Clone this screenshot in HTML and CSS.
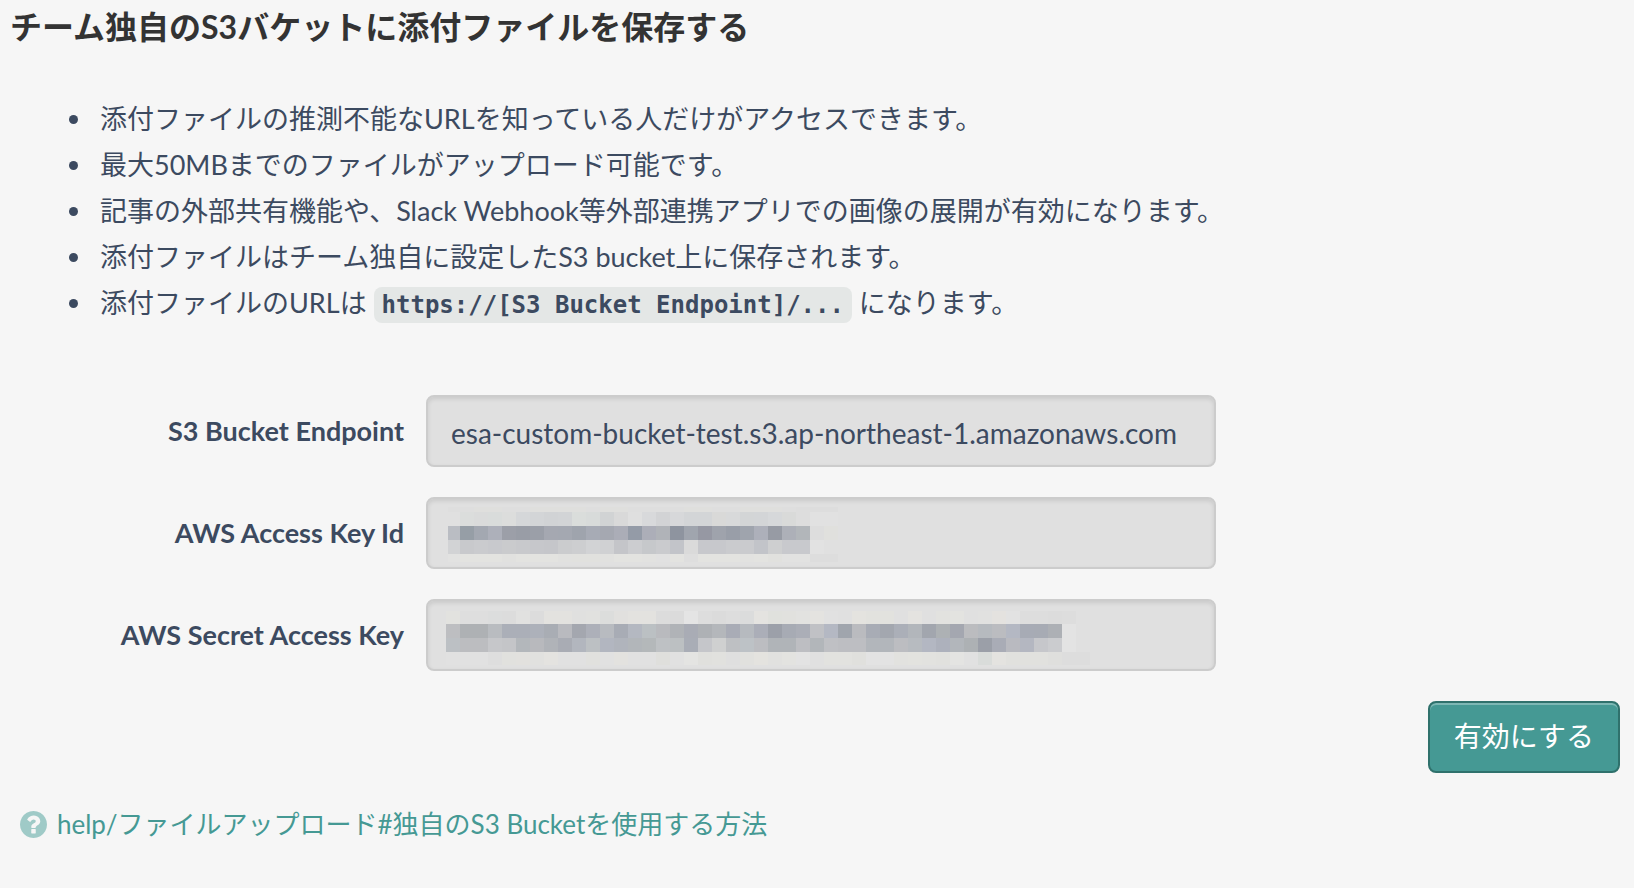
FILE: index.html
```html
<!DOCTYPE html>
<html lang="ja">
<head>
    <meta charset="UTF-8">
    <meta name="viewport" content="width=device-width, initial-scale=1.0">
    <title>チーム独自のS3バケットに添付ファイルを保存する</title>
    <link rel="stylesheet" href="styles.css">
</head>
<body>
    <main class="settings">
        <h1 class="settings-title">チーム独自のS3バケットに添付ファイルを保存する</h1>

        <ul class="notes">
            <li>添付ファイルの推測不能なURLを知っている人だけがアクセスできます。</li>
            <li>最大50MBまでのファイルがアップロード可能です。</li>
            <li>記事の外部共有機能や、Slack Webhook等外部連携アプリでの画像の展開が有効になります。</li>
            <li>添付ファイルはチーム独自に設定したS3 bucket上に保存されます。</li>
            <li>添付ファイルのURLは <code>https://[S3 Bucket Endpoint]/...</code> になります。</li>
        </ul>

        <form class="bucket-form">
            <div class="form-row">
                <label for="endpoint">S3 Bucket Endpoint</label>
                <div class="field">
                    <input type="text" id="endpoint" value="esa-custom-bucket-test.s3.ap-northeast-1.amazonaws.com" disabled>
                </div>
            </div>
            <div class="form-row">
                <label for="access-key">AWS Access Key Id</label>
                <div class="field">
                    <input type="text" id="access-key" disabled>
                    <svg class="mask mask-access" id="access-mask" width="400" height="55" aria-hidden="true"></svg>
                </div>
            </div>
            <div class="form-row">
                <label for="secret-key">AWS Secret Access Key</label>
                <div class="field">
                    <input type="text" id="secret-key" disabled>
                    <svg class="mask mask-secret" id="secret-mask" width="646" height="55" aria-hidden="true"></svg>
                </div>
            </div>
            <button type="submit" class="submit-btn">有効にする</button>
        </form>

        <p class="help">
            <svg class="help-icon" viewBox="128 128 1536 1536" aria-hidden="true">
                <path d="M1024 1376v-192q0-14-9-23t-23-9h-192q-14 0-23 9t-9 23v192q0 14 9 23t23 9h192q14 0 23-9t9-23zm256-672q0-88-55.5-163t-138.5-116-170-41q-243 0-371 213-15 24 8 42l132 100q7 6 19 6 16 0 25-12 53-68 86-92 34-24 86-24 48 0 85.5 26t37.5 59q0 38-20 61t-68 45q-63 28-115.5 86.5t-52.5 125.5v36q0 14 9 23t23 9h192q14 0 23-9t9-23q0-19 21.5-49.5t54.5-49.5q32-18 49-28.5t46-35 44.5-48 28-60.5 12.5-81zm384 192q0 209-103 385.5t-279.5 279.5-385.5 103-385.5-103-279.5-279.5-103-385.5 103-385.5 279.5-279.5 385.5-103 385.5 103 279.5 279.5 103 385.5z"/>
            </svg>
            <a href="#help">help/ファイルアップロード#独自のS3 Bucketを使用する方法</a>
        </p>
    </main>
    <script src="mask.js"></script>
</body>
</html>
```

FILE: styles.css
```css
* {
    box-sizing: border-box;
}
body {
    margin: 0;
    background-color: #f6f6f6;
    color: #3c4a60;
    font-family: Lato, "Noto Sans CJK JP", sans-serif;
    font-size: 27px;
    line-height: 46px;
}
.settings {
    padding: 3px 14px 32px 10px;
}
.settings-title {
    margin: 0 0 45px;
    color: #333;
    font-size: 32px;
    font-weight: bold;
    line-height: 48px;
}
.notes {
    margin: 0 0 67px;
    padding-left: 84px;
}
.notes li {
    padding-left: 6px;
}
.notes code {
    padding: 4px 8px;
    border-radius: 8px;
    background-color: #e4e7e6;
    font-family: "DejaVu Sans Mono", monospace;
    font-size: 24px;
    font-weight: bold;
}
.bucket-form {
    display: flex;
    flex-direction: column;
    gap: 30px;
    margin-bottom: 28px;
}
.form-row {
    display: grid;
    grid-template-columns: 197fr 395fr 191fr;
    column-gap: 22px;
    align-items: center;
}
.form-row label {
    font-weight: bold;
    text-align: right;
}
.field {
    position: relative;
}
.field input {
    display: block;
    width: 100%;
    height: 72px;
    padding: 4px 23px 0;
    border: 2px solid #ccc;
    border-radius: 8px;
    background-color: #e0e0e0;
    box-shadow: inset 0 2px 4px rgba(0,0,0,0.1);
    color: #3c4a60;
    font-family: inherit;
    font-size: 28px;
}
.mask {
    position: absolute;
    shape-rendering: crispEdges;
}
.mask-access { top: 10px; left: 22px; }
.mask-secret { top: 12px; left: 20px; }
.submit-btn {
    align-self: flex-end;
    height: 72px;
    padding: 0 24px 4px;
    border: 2px solid #2f716c;
    border-radius: 8px;
    background-color: #459994;
    box-shadow: inset 0 2px 0 rgba(255,255,255,0.3);
    color: #fff;
    font-family: inherit;
    font-size: 28px;
    cursor: pointer;
}
.help {
    display: flex;
    align-items: center;
    gap: 10px;
    margin: 0;
    padding-left: 10px;
    font-size: 26px;
}
.help-icon {
    width: 27px;
    height: 27px;
    fill: #9fcac7;
}
.help a {
    color: #459994;
    text-decoration: none;
}
```

FILE: mask.js
```js
// 伏せ字のモザイク。rows: [y, 高さ, 色の並び]
const CELL = 14;

function drawMask(id, firstWidth, rows) {
    const svg = document.getElementById(id);
    rows.forEach(([y, height, colors]) => {
        let x = 0;
        colors.split(' ').forEach((color, i) => {
            const width = i === 0 ? firstWidth : CELL;
            const rect = document.createElementNS('http://www.w3.org/2000/svg', 'rect');
            rect.setAttribute('x', x);
            rect.setAttribute('y', y);
            rect.setAttribute('width', width);
            rect.setAttribute('height', height);
            rect.setAttribute('fill', '#' + color);
            svg.appendChild(rect);
            x += width;
        });
    });
}

drawMask('access-mask', 12, [
    [0, 5, 'dedede dedede dfdfdd dfdfdd dedede dedede dfdfdd dfdfdd dfdfdd dfdfdd dedede dfdfdd dfdfdd dedede dedede dedede dedede dfdfdd dfdfdd dedede dedede dfdfdd dfdfdd dfdfdd dedede dddddd dddddd dddddd'],
    [5, 14, 'e0e0e0 dbdddc dadbdb d9dcdb dcdddc d5d7d9 d3d5d7 d1d3d5 d2d4d6 dadddb d8dbda d1d3d4 d9d9d9 dfdfdf d8d9db d2d3d5 d7d8da d3d5d7 d3d5d7 d9d9d8 d8d9da d3d5d6 d3d5d7 d6d8da d9dad9 dddddd e1e1e1 e1e1e1'],
    [19, 14, 'babdc3 969ea6 a3a8b1 adb0ba 9c9fa8 999da6 9b9fa8 a5a8b1 a4a8b1 9fa4ad a7abb5 a5a8b1 abadb7 949ba7 acaeb8 b0b3b8 8e949f a0a5ae 9698a3 9fa3ac 999ea8 9fa4ad adb0ba 979ba4 adb0b8 b2b6ba dddddd e0e0dd'],
    [33, 14, 'd2d3d5 c8c9cc cacbce c8c9cd cacbcd c8c9cc c6c7cb c5c6ca cbccce cdced0 d2d3d5 d0d1d3 c4c5c9 cccdd0 c6c8cb cacbce c2c4c9 dadada c7c8cc c7c8cc cacbce cacbce c2c4c9 cecfd0 c8c9cd c8c9cd e2e2e2'],
    [47, 8, 'e2e2e1 e3e3e0 e3e3e0 e3e3e0 e1e1df e3e3e0 e3e3e0 e3e3e0 e1e1df e1e1de e1e1de e1e1df e3e3e0 e3e3e0 e2e2e0 e1e1e1 e3e3e0 dedede e3e3e0 e3e3e0 e3e3e0 e2e2e0 e3e3e0 e1e1de e2e2e1 e2e2e1 dddddd dddddd']
]);

drawMask('secret-mask', 14, [
    [0, 13, 'e2e2df dedede dedede dcdddd dcdcdc e1e1e0 dcdcdc e3e2df e3e2df e0e0df e1e1df dcdddc e1e0de e3e2df e3e2df dcdcdc dbdbdb e4e4e4 dddddd dbdbdb dddddd dbdcdc e4e3e0 e0e1dd e1e1de e2e2e0 e4e3e0 e1e1e1 e0e0e0 e4e3df e2e2de e2e2de e0e0e0 e4e3e0 e0e0e0 e2e2df e3e3e0 e0e0e0 e1e1e0 e4e2df e2e2e2 dddddd dddddd dcdcdc dddddd'],
    [13, 14, 'bdbec1 aeb1b4 aeb1b4 b9bcc0 abafb8 abafb8 adb1ba a9adb4 b9babf a4a7af adb0b9 b8bbc0 a8acb5 b4b8c1 bbc0c3 b9babe b0b3b7 a9acb5 aeb1b5 b4b7bb a9acb6 b6babf abaeb8 9ca0a9 a7abb4 abaeb7 c0c1c5 b4b8c3 a0a5ad babbbf a8acb5 a3a7af abafb8 b2b6bb a2a6ae adb1b4 a4a7b0 bbbcbf b6babf bbbcc0 b4b8c3 a7abb5 a7abb4 adb0b5 e3e3e3'],
    [27, 14, 'bcc0c4 bcbdc0 bcbdc0 c6c7ca c4c5c8 b3b7bb b8b9bd b0b3b8 a9acb4 b2b6be bcc0c3 b2b6c0 b0b4bc b2b6ba b4b8ba bec1c4 bcc0c2 a9adb6 c5c6ca cfd0d0 bec0c3 bdc2c6 bcbdc1 b0b4b8 b0b4b8 bdbec2 b2b6ba bfc0c4 bdbec2 bdbec2 b2b6bb b2b6bb bcbdc1 b7bbc0 b3b7c2 adb1bc b2b6bb adb1b4 9b9fa8 a9acb6 b9bac0 b4b7c1 c6c7cb cbcccf e3e3e3'],
    [41, 13, 'e1e1e1 e1e1e1 e1e1e1 dedede e1e1de e2e1de e1e1df e4e3e0 e1e1e1 e1e1e1 e1e1de e1e1e1 e3e2df e1e1e1 e1e1e1 dfdfdc e1e1e1 e4e4e2 e0e0dd e1e1de dfdfdf e1e1de e4e3df e1e1df e3e3e0 e3e3e3 e0e0e0 e2e2df e2e2df e0e0dd e3e3e3 e3e3e3 e2e2df e3e3df e2e2df e1e1de e4e4e2 e1e1e1 d9dcda e4e3e0 e1e1de e1e1de e1e1de dfdfdd dddddd dddddd']
]);
```
